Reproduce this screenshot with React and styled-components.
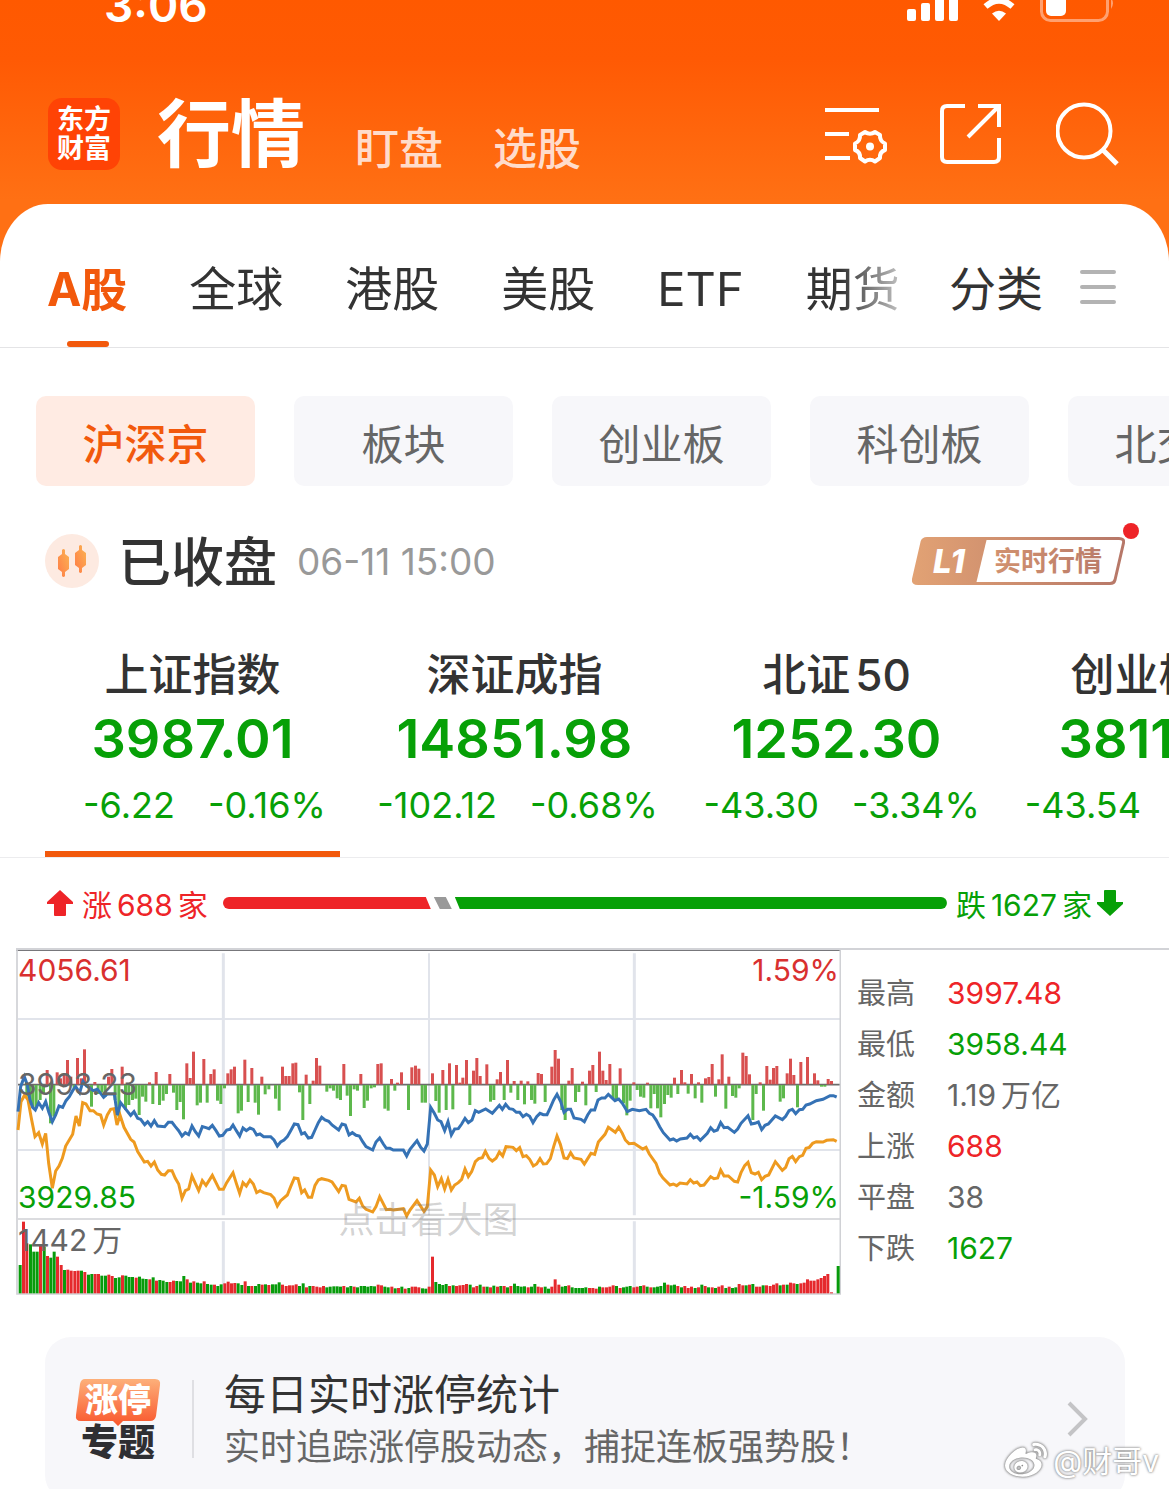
import styled, { createGlobalStyle } from "styled-components";
import { FaWeibo } from "react-icons/fa";

const GlobalStyle = createGlobalStyle`
  * {
    box-sizing: border-box;
  }
  body {
    margin: 0;
    background: #fff;
    color: #333;
    font-family: Inter, "Noto Sans CJK SC", sans-serif;
  }
  button {
    margin: 0;
    padding: 0;
    border: none;
    background: none;
    color: inherit;
    font: inherit;
    white-space: nowrap;
    cursor: pointer;
  }
  svg {
    display: block;
    flex-shrink: 0;
  }
`;

const red = "#ee2428";
const green = "#07a007";
const orange = "#f2590c";

const Page = styled.div`
  position: relative;
  height: 100vh;
  overflow: hidden;
  background: linear-gradient(#ff5900 0, #ff5a04 60px, #ff7014 200px);
`;

const StatusBar = styled.div`
  display: flex;
  justify-content: space-between;
  align-items: flex-end;
  height: 24px;
  padding: 0 54px 0 104px;
  color: #fff;
`;

const Clock = styled.span`
  height: 38px;
  font-size: 46px;
  line-height: 38px;
  font-weight: 600;
`;

const Header = styled.header`
  display: flex;
  align-items: center;
  padding: 74px 49px 34px 48px;
  color: #fff;
`;

const Logo = styled.div`
  display: grid;
  place-content: center;
  width: 72px;
  height: 72px;
  border-radius: 14px;
  background: #ff4305;
  font-size: 27px;
  line-height: 29px;
  font-weight: 700;
`;

const MainNav = styled.nav`
  display: flex;
  align-items: flex-end;
  flex: 1;
  gap: 50px;
  height: 72px;
  margin-left: 37px;
`;

const NavButton = styled.button`
  color: ${(p) => (p.$active ? "#fff" : "#ffdccb")};
  font-size: ${(p) => (p.$active ? "74px" : "44px")};
  line-height: ${(p) => (p.$active ? "72px" : "42px")};
  font-weight: ${(p) => (p.$active ? 700 : 500)};
`;

const HeaderIcons = styled.div`
  display: flex;
  gap: 52px;
`;

const Sheet = styled.main`
  border-radius: 48px 48px 0 0 / 58px 58px 0 0;
  background: #fff;
`;

const TabBar = styled.div`
  display: flex;
  height: 144px;
  border-bottom: 1px solid #e4e4e6;
`;

const TabScroller = styled.div`
  display: flex;
  flex: 1;
  gap: 62px;
  min-width: 0;
  padding-left: 47px;
  overflow: hidden;
  mask-image: linear-gradient(to right, #000 calc(100% - 84px), transparent);
`;

const Tab = styled.button`
  position: relative;
  padding-bottom: 28px;
  padding-top: 55px;
  color: ${(p) => (p.$active ? orange : "#333")};
  font-size: ${(p) => (p.$active ? "46px" : "47px")};
  line-height: 60px;
  font-weight: ${(p) => (p.$active ? 700 : 400)};

  &::after {
    content: "";
    display: ${(p) => (p.$active ? "block" : "none")};
    position: absolute;
    bottom: 0;
    left: 50%;
    width: 42px;
    height: 6px;
    margin-left: -20px;
    border-radius: 3px;
    background: ${orange};
  }
`;

const TabTools = styled.div`
  display: flex;
  gap: 36px;
  padding: 0 52px 0 24px;
`;

const MenuButton = styled.button`
  padding-top: 24px;
`;

const Chips = styled.div`
  display: flex;
  gap: 39px;
  padding: 48px 0 48px 36px;
  overflow: hidden;
`;

const Chip = styled.button`
  flex: 0 0 219px;
  height: 90px;
  border-radius: 10px;
  background: ${(p) => (p.$active ? "#ffebe3" : "#f7f7fa")};
  color: ${(p) => (p.$active ? orange : "#666")};
  font-size: 42px;
  font-weight: ${(p) => (p.$active ? 500 : 400)};
`;

const MarketState = styled.div`
  display: flex;
  align-items: center;
  height: 54px;
  padding: 0 44px 0 45px;
`;

const StateTitle = styled.h2`
  margin: 0 20px 0 19px;
  padding-top: 4px;
  font-size: 53px;
  line-height: 54px;
  font-weight: 500;
`;

const Time = styled.time`
  flex: 1;
  color: #999;
  font-size: 37px;
`;

const LevelButton = styled.button`
  position: relative;
`;

const Dot = styled.span`
  position: absolute;
  top: -14px;
  right: -14px;
  width: 16px;
  height: 16px;
  border-radius: 50%;
  background: ${red};
`;

const IndexList = styled.div`
  display: flex;
  gap: 27px;
  padding: 57px 0 0 45px;
  overflow: hidden;
  border-bottom: 1px solid #ececee;
`;

const IndexItem = styled.button`
  flex: 0 0 295px;
  padding-bottom: 24px;
  border-bottom: 6px solid ${(p) => (p.$active ? orange : "transparent")};
  color: ${green};
`;

const IndexName = styled.div`
  color: #333;
  font-size: 44px;
  line-height: 60px;
  font-weight: 500;
`;

const IndexValue = styled.div`
  margin-bottom: 10px;
  font-size: 54px;
  line-height: 68px;
  font-weight: 600;
`;

const IndexChange = styled.div`
  display: grid;
  grid-template-columns: 130px auto;
  justify-content: start;
  gap: 33px;
  font-size: 36px;
  line-height: 44px;

  span:first-child {
    justify-self: end;
  }
`;

const Breadth = styled.div`
  display: flex;
  align-items: center;
  height: 90px;
  padding: 0 46px 0 47px;
`;

const BreadthText = styled.span`
  margin: ${(p) => (p.$up ? "0 15px 0 9px" : "0 5px 0 9px")};
  color: ${(p) => (p.$up ? red : green)};
  font-size: 30px;
  white-space: nowrap;
`;

const BreadthBar = styled.div`
  display: flex;
  flex: 1;
  gap: 3px;
  height: 12px;
  border-radius: 6px;
  overflow: hidden;
`;

const Segment = styled.div`
  background: ${(p) => p.$color};
  clip-path: ${(p) => p.$shape};
`;

const Quote = styled.section`
  display: grid;
  grid-template-columns: 825fr 328fr;
  margin-left: 16px;
  border-top: 2px solid #d2d3d7;
`;

const ChartBox = styled.div`
  position: relative;

  svg {
    width: 100%;
  }
`;

const ChartLabel = styled.span`
  position: absolute;
  top: ${(p) => p.$top};
  left: ${(p) => (p.$right ? "auto" : "2px")};
  right: ${(p) => (p.$right ? "2px" : "auto")};
  color: ${(p) => p.$color || "#666"};
  font-size: 30px;
  line-height: 36px;
`;

const ChartHint = styled.span`
  position: absolute;
  top: 73%;
  left: 0;
  right: 0;
  color: rgba(120, 120, 120, 0.32);
  font-size: 36px;
  line-height: 36px;
  text-align: center;
`;

const Stats = styled.dl`
  display: grid;
  grid-template-columns: 90px 1fr;
  align-content: start;
  margin: 0;
  padding: 18px 0 0 16px;
  font-size: 29px;
  line-height: 51px;
`;

const StatLabel = styled.dt`
  color: #666;
`;

const StatValue = styled.dd`
  margin: 0;
  color: ${(p) => p.$color || "#666"};
  font-size: 30px;
`;

const Spaced = styled.span`
  display: inline-flex;
  align-items: baseline;
  gap: 5px;
`;

const Promo = styled.a`
  display: flex;
  align-items: center;
  height: 164px;
  margin: 42px 44px 0 45px;
  padding: 0 36px 0 30px;
  border-radius: 26px;
  background: #f7f7fa;
  color: inherit;
  text-decoration: none;
`;

const PromoDivider = styled.div`
  width: 2px;
  height: 78px;
  margin: 0 30px 0 31px;
  background: #dfdfe3;
`;

const PromoText = styled.div`
  flex: 1;
  padding-top: 4px;
`;

const PromoTitle = styled.div`
  font-size: 42px;
  line-height: 34px;
`;

const PromoSub = styled.div`
  margin-top: 18px;
  color: #666;
  font-size: 36px;
  line-height: 34px;
`;

const Watermark = styled.div`
  position: absolute;
  right: 10px;
  bottom: 7px;
  display: flex;
  align-items: center;
  gap: 6px;
  color: #fff;
  font-size: 30px;
  line-height: 38px;
  text-shadow: 0 0 3px #888, 0 0 2px #999;

  svg {
    filter: drop-shadow(0 0 1px #888) drop-shadow(0 0 1px #999);
  }
`;

const tabs = ["A股", "全球", "港股", "美股", "ETF", "期货"];
const chips = ["沪深京", "板块", "创业板", "科创板", "北交所"];

const indexes = [
  { name: "上证指数", value: "3987.01", change: "-6.22", percent: "-0.16%" },
  { name: "深证成指", value: "14851.98", change: "-102.12", percent: "-0.68%" },
  { name: "北证50", value: "1252.30", change: "-43.30", percent: "-3.34%" },
  { name: "创业板指", value: "3811.56", change: "-43.54", percent: "-1.13%" },
];

const stats = [
  ["最高", "3997.48", red],
  ["最低", "3958.44", green],
  ["金额", "1.19万亿"],
  ["上涨", "688", red],
  ["平盘", "38"],
  ["下跌", "1627", green],
];

const priceLine =
  "24,725 32,650 43,620 52,645 60,690 68,712 76,720 86,698 97,715 107,695 116,725 127,755 137,735 147,708 158,712 168,692 178,680 188,662 197,650 209,668 219,634 229,648 240,655 250,662 262,658 272,670 281,682 292,672 313,672 322,735 332,698 343,712 362,736 372,725 383,745 392,748 404,764 413,755 423,768 433,752 443,768 464,770 475,757 486,757 496,770 506,782 516,798 526,788 536,794 546,768 556,785 566,798 577,770 588,773 597,776 607,766 618,782 628,798 638,796 650,780 660,778 669,765 679,782 689,798 699,774 709,782 720,774 730,778 740,795 750,792 761,800 782,800 792,810 802,828 812,816 822,810 832,800 842,782 853,762 864,764 875,792 884,788 895,804 905,802 915,780 925,758 935,742 945,750 956,754 966,765 986,780 996,762 1006,765 1017,795 1027,788 1038,796 1048,798 1058,815 1068,830 1088,840 1098,816 1109,804 1120,822 1129,835 1140,835 1150,840 1180,840 1190,858 1200,838 1221,812 1232,832 1242,843 1252,822 1262,712 1273,730 1283,750 1293,755 1304,782 1314,755 1324,795 1334,777 1345,776 1355,762 1365,745 1375,758 1386,750 1396,722 1406,727 1427,717 1447,730 1468,706 1477,718 1487,703 1498,716 1509,718 1519,727 1529,727 1539,740 1549,733 1559,739 1569,758 1580,740 1590,730 1600,734 1611,734 1620,715 1631,690 1641,673 1652,695 1662,727 1672,718 1682,718 1692,744 1713,748 1723,755 1733,735 1743,720 1754,720 1764,690 1775,684 1785,684 1795,673 1815,692 1826,687 1837,700 1852,725 1867,718 1888,722 1908,718 1918,730 1928,735 1939,751 1949,770 1960,788 1980,810 1990,807 2000,813 2011,807 2031,804 2041,793 2051,804 2061,800 2071,811 2092,790 2102,773 2112,784 2122,780 2132,758 2142,773 2153,772 2173,787 2183,777 2193,760 2214,737 2224,762 2235,760 2245,756 2255,779 2265,766 2275,762 2296,738 2317,749 2327,739 2337,722 2347,718 2357,731 2368,719 2378,718 2388,705 2399,702 2419,692 2439,688 2460,677 2470,677 2480,681";

const averageLine =
  "24,780 33,695 44,675 54,690 64,745 75,800 86,788 97,822 107,790 116,880 127,955 137,903 147,888 157,865 167,828 188,793 198,738 208,768 218,698 228,702 240,722 250,722 261,732 272,735 281,765 292,735 302,718 312,716 321,765 330,735 342,772 362,808 372,816 383,845 403,876 413,874 423,888 433,876 443,900 454,913 464,915 475,902 486,902 496,925 506,942 516,985 526,962 536,957 546,918 556,940 566,962 577,932 588,946 607,916 628,958 640,958 650,938 669,908 679,940 689,970 699,938 709,948 720,930 730,942 740,968 750,962 761,968 782,974 792,984 802,1008 812,992 832,975 842,950 853,924 864,926 875,968 884,960 895,982 905,982 915,946 925,930 935,926 956,931 966,936 986,965 996,946 1006,948 1017,988 1038,996 1048,985 1058,1008 1068,1018 1088,1026 1098,1010 1109,980 1129,1019 1140,1018 1150,1020 1180,1016 1190,1038 1200,1020 1221,992 1242,1024 1252,1010 1262,900 1273,915 1283,950 1294,926 1304,957 1314,928 1324,960 1334,945 1345,938 1355,928 1365,897 1375,920 1385,905 1396,875 1406,866 1417,863 1426,844 1437,865 1447,873 1458,865 1468,846 1478,858 1488,830 1509,832 1519,842 1529,833 1539,860 1549,857 1559,868 1570,888 1580,882 1590,866 1600,882 1610,881 1621,866 1631,830 1641,798 1651,823 1662,864 1672,866 1682,848 1692,864 1713,868 1723,882 1743,850 1754,853 1765,816 1785,793 1795,772 1816,787 1826,772 1837,790 1846,810 1857,821 1872,820 1898,837 1908,832 1918,852 1938,880 1949,910 1959,924 1980,945 1990,942 2000,947 2010,939 2031,942 2041,929 2051,939 2061,936 2071,947 2082,945 2102,920 2112,926 2123,924 2132,900 2142,918 2155,918 2173,934 2183,936 2193,908 2204,887 2214,877 2224,908 2235,912 2245,907 2255,929 2265,919 2276,915 2296,875 2317,901 2327,892 2337,866 2347,859 2357,875 2368,860 2378,856 2388,835 2398,832 2408,820 2419,815 2439,816 2450,811 2470,809 2480,814";

// x and far end of each momentum bar, the near end sits on the middle axis
const upBars =
  "111,600 141,607 151,625 162,615 172,570 182,620 202,564 213,625 223,538 254,636 295,620 305,597 336,590 418,637 438,606 479,612 530,580 540,624 550,545 581,567 602,612 612,598 653,610 663,598 673,590 704,569 725,594 755,620 817,590 827,618 837,618 848,580 857,578 888,614 909,632 919,564 929,587 1001,582 1052,612 1103,582 1113,580 1144,627 1162,638 1174,607 1205,592 1216,587 1226,596 1267,610 1298,600 1318,580 1339,585 1349,638 1358,623 1369,570 1390,602 1400,564 1410,618 1430,583 1461,628 1471,606 1492,570 1512,633 1533,632 1553,634 1584,609 1594,612 1625,590 1635,540 1645,566 1676,632 1686,594 1717,635 1738,602 1748,585 1768,545 1778,602 1788,630 1799,582 1830,595 1871,637 1912,638 1993,623 2014,600 2024,637 2044,612 2065,637 2086,625 2096,621 2106,582 2126,628 2136,553 2156,620 2198,548 2208,558 2218,613 2250,637 2270,588 2280,629 2290,594 2300,588 2331,610 2341,566 2351,615 2372,576 2392,561 2413,610 2423,631 2454,627 2464,633";

const downBars =
  "50,680 60,700 68,712 78,715 90,690 100,672 121,760 131,740 192,655 244,710 264,672 275,668 285,680 315,690 326,740 346,720 356,705 367,690 377,686 387,735 397,680 407,695 428,702 448,705 459,692 469,672 490,668 500,720 510,696 520,748 561,706 571,698 591,698 622,692 632,702 643,655 684,730 694,722 714,696 735,698 745,734 765,673 776,658 796,686 807,722 868,667 878,750 899,702 950,665 960,655 970,662 981,685 991,690 1011,677 1021,738 1032,658 1042,662 1062,714 1072,692 1083,655 1093,652 1124,716 1134,722 1154,662 1195,720 1236,698 1246,698 1277,693 1287,728 1308,720 1328,718 1379,705 1441,695 1451,690 1482,690 1502,668 1523,690 1543,703 1564,690 1574,701 1605,696 1655,720 1665,750 1696,696 1706,666 1727,706 1758,666 1809,685 1819,688 1840,700 1850,736 1860,692 1881,660 1891,680 1901,683 1922,715 1932,672 1942,715 1952,742 1963,702 1973,675 1983,683 2003,672 2034,671 2055,685 2075,698 2116,680 2147,716 2167,678 2177,683 2187,655 2228,750 2238,672 2260,722 2310,695 2320,685 2362,712 2434,650 2444,650";

// one bar a minute, negative is a falling minute
const volumes = [
  -85, 215, 150, -147, -125, -125, 142, -140, 112, -107, -125, 110, 85, -70, 71,
  68, 67, 68, -68, 64, -56, -58, 58, 58, -53, -53, 56, 52, -46, -48, 54, -53,
  -49, -49, 47, -50, -44, -43, 42, -48, 38, -40, -38, -34, 34, 38, -37, -36,
  -52, 42, -32, 36, -32, -30, 36, -28, -26, 26, -22, -27, 30, 35, 30, 31, -30,
  -25, 36, -22, 22, -22, -28, 26, -27, 25, -27, -27, -33, 26, 22, 24, 24, 27,
  -22, -30, 18, -22, 22, 20, 18, 22, -18, -20, -21, -21, -20, 22, -18, -22, 20,
  -18, -22, -22, -20, -22, -21, 26, 24, -20, -18, 20, -15, 16, -20, 14, -16, 20,
  20, 18, -15, -14, 20, 110, -34, -28, -25, -28, 22, -24, 22, 24, 25, 28, -26,
  18, 22, -26, 20, -20, 18, -23, 20, -22, 22, -18, 22, -29, -22, -20, -21, 18,
  -20, -28, 20, 18, -20, -14, 20, 42, 26, -20, -22, 24, -18, -16, -16, -16, -18,
  16, 16, 14, -20, 18, 18, 20, 24, -22, 16, -18, -20, -22, 18, 20, -22, 24, -20,
  18, -18, -20, -22, -32, 26, -24, -26, 22, -18, 22, 16, 20, -16, 18, -26, 22,
  -18, 18, -16, 20, 24, -16, 20, -16, -18, 28, 24, -24, 26, -28, 20, 20, -24,
  24, 22, 26, 30, -24, 26, -26, 32, 30, -28, 30, 32, 42, 38, 38, 42, 46, 52, 58,
  3, 0, -82,
];

const parse = (points) => points.split(" ").map((p) => p.split(",").map(Number));

// puts a thin gap between the digits and the characters next to them
const Mixed = ({ text }) => (
  <Spaced>
    {text
      .split(/([\d.]+)/)
      .filter(Boolean)
      .map((part) => (
        <span key={part}>{part}</span>
      ))}
  </Spaced>
);

const Chart = () => (
  <svg viewBox="18 240 2475 1035" aria-hidden="true">
    <g stroke="#e1e4eb">
      <path d="M24 447H2490M24 840H2490" strokeWidth="6" />
      <path d="M640 250V1036M640 1054V1270M1873 250V1036M1873 1054V1270" strokeWidth="9" />
      <path d="M1257 250V1036M1257 1054V1270" strokeWidth="6" />
    </g>
    <path d="M24 644H2490" stroke="#6c6c6c" strokeWidth="5" />
    <path d="M18 241H2490" stroke="#77777b" strokeWidth="4" />
    <path d="M24 1047H2490M21 240V1272H2491V240" fill="none" stroke="#d0d1d5" strokeWidth="5" />
    {parse(upBars).map(([x, y]) => (
      <rect key={x} x={x - 4} y={y} width="9" height={643 - y} fill="#d85050" />
    ))}
    {parse(downBars).map(([x, y]) => (
      <rect key={x} x={x - 4} y="645" width="9" height={y - 645} fill="#5db84c" />
    ))}
    {volumes.map((v, i) => (
      <rect
        key={i}
        x={26 + Math.round(i * 10.225)}
        y={1270 - Math.abs(v)}
        width="9"
        height={Math.abs(v)}
        fill={v > 0 ? "#e5292d" : "#079b0b"}
      />
    ))}
    <polyline points={averageLine} fill="none" stroke="#ee9a1f" strokeWidth="9" />
    <polyline points={priceLine} fill="none" stroke="#3572b5" strokeWidth="9" />
  </svg>
);

const PhoneIcons = () => (
  <svg width="208" height="24" viewBox="0 0 208 24" fill="#fff" aria-hidden="true">
    <rect x="0" y="9" width="9" height="12" rx="2" />
    <rect x="14" y="3" width="9" height="18" rx="2" />
    <rect x="28" y="-6" width="9" height="27" rx="2" />
    <rect x="42" y="-12" width="9" height="33" rx="2" />
    <path d="M92 21L85 13.500Q92 8 99 13.500Z" />
    <path d="M78.500 6.500Q92 -5.500 105.500 6.500" fill="none" stroke="#fff" strokeWidth="6" />
    <path d="M70 -2Q92 -21 114 -2" fill="none" stroke="#fff" strokeWidth="5" />
    <rect x="134.500" y="-14" width="66" height="34.500" rx="9" fill="none" stroke="#ffa070" strokeWidth="3" />
    <rect x="139" y="-8" width="20" height="24" rx="5" />
    <path d="M204 -2q4 5 0 11z" fill="#ffa070" />
  </svg>
);

const Candles = () => (
  <svg width="54" height="54" viewBox="0 0 54 54" aria-hidden="true">
    <defs>
      <linearGradient id="candle" x1="0" y1="1" x2="1" y2="0">
        <stop offset="0" stopColor="#ff7c46" />
        <stop offset="1" stopColor="#fbb453" />
      </linearGradient>
    </defs>
    <circle cx="27" cy="27" r="27" fill="#fdeae1" />
    <g fill="url(#candle)">
      <path d="M17 16q1.500 -2 3 0v4l4 3v12l-4 3v4q-1.500 2 -3 0v-4l-4 -3v-12l4 -3z" />
      <path d="M34 12q1.500 -2 3 0v4l4 3v12l-4 3v4q-1.500 2 -3 0v-4l-4 -3v-12l4 -3z" />
    </g>
  </svg>
);

const LevelBadge = () => (
  <svg width="213" height="48" viewBox="0 0 213 48" fontFamily='Inter, "Noto Sans CJK SC", sans-serif'>
    <defs>
      <linearGradient id="level" gradientUnits="userSpaceOnUse" x1="0" y1="0" x2="213" y2="0">
        <stop offset="0" stopColor="#e2a274" />
        <stop offset="1" stopColor="#b67768" />
      </linearGradient>
    </defs>
    <path
      d="M15 1.500H207Q212.500 1.500 211.500 6L203 43Q202 46.500 198 46.500H6Q0.500 46.500 1.500 42L10 5Q11 1.500 15 1.500Z"
      fill="#fff"
      stroke="url(#level)"
      strokeWidth="3"
    />
    <path d="M14 1H75L64 47H5Q1 47 2 42L10 5Q11 1 14 1Z" fill="url(#level)" />
    <text x="21" y="36" fontSize="33" fontWeight="800" fontStyle="italic" fill="#fff">
      L1
    </text>
    <text x="82" y="34" fontSize="27" fontWeight="700" fill="url(#level)">
      实时行情
    </text>
  </svg>
);

const PromoIcon = () => (
  <svg width="86" height="80" viewBox="0 0 86 80" fontFamily='"Noto Sans CJK SC", sans-serif' fontWeight="900">
    <defs>
      <linearGradient id="promo" x1="0" y1="0" x2="0" y2="1">
        <stop offset="0" stopColor="#fdb07a" />
        <stop offset="1" stopColor="#f9562c" />
      </linearGradient>
    </defs>
    <path
      d="M10 0H80Q86 0 85 6L81 37Q80 42 75 42H48L43 47L38 42H6Q0 42 1 36L5 5Q6 0 10 0Z"
      fill="url(#promo)"
    />
    <text x="10" y="33" fontSize="33" fill="#fff">
      涨停
    </text>
    <text x="6" y="77" fontSize="37" fill="#2f2f33">
      专题
    </text>
  </svg>
);

const App = () => {
  return (
    <Page>
      <GlobalStyle />
      <StatusBar>
        <Clock>3:06</Clock>
        <PhoneIcons />
      </StatusBar>

      <Header>
        <Logo>
          <span>东方</span>
          <span>财富</span>
        </Logo>
        <MainNav>
          <NavButton $active>行情</NavButton>
          <NavButton>盯盘</NavButton>
          <NavButton>选股</NavButton>
        </MainNav>
        <HeaderIcons>
          <button aria-label="设置">
            <svg width="64" height="64" viewBox="0 0 64 64" fill="none" stroke="#fff" strokeWidth="4">
              <path d="M1 8H55M1 32H25M1 56H26" />
              <path
                d="M41 30Q46 33.500 51 30L56 33Q55.500 39 61 41.500V48Q55.500 50 56 56L51 59.500Q46 56 41 59.500L36 56Q36.500 50 31 48V41.500Q36.500 39 36 33Z"
                strokeLinejoin="round"
              />
              <circle cx="46" cy="44.500" r="4" fill="#fff" stroke="none" />
            </svg>
          </button>
          <button aria-label="分享">
            <svg width="64" height="64" viewBox="0 0 64 64" fill="none" stroke="#fff" strokeWidth="4">
              <path d="M25 4H7Q2 4 2 9V55Q2 60 7 60H54Q59 60 59 55V36M38 4H59V25M58 5L28 35" />
            </svg>
          </button>
          <button aria-label="搜索">
            <svg width="64" height="64" viewBox="0 0 64 64" fill="none" stroke="#fff" strokeWidth="4">
              <circle cx="28" cy="29" r="26.500" />
              <path d="M47 48L61 62" strokeWidth="5" />
            </svg>
          </button>
        </HeaderIcons>
      </Header>

      <Sheet>
        <TabBar>
          <TabScroller>
            {tabs.map((tab, i) => (
              <Tab key={tab} $active={i === 0}>
                {tab}
              </Tab>
            ))}
          </TabScroller>
          <TabTools>
            <Tab>分类</Tab>
            <MenuButton aria-label="更多">
              <svg width="38" height="38" viewBox="0 0 38 38" stroke="#b3b3b3" strokeWidth="4" strokeLinecap="round">
                <path d="M3 3H35M3 18H35M3 33H35" />
              </svg>
            </MenuButton>
          </TabTools>
        </TabBar>

        <Chips>
          {chips.map((chip, i) => (
            <Chip key={chip} $active={i === 0}>
              {chip}
            </Chip>
          ))}
        </Chips>

        <MarketState>
          <Candles />
          <StateTitle>已收盘</StateTitle>
          <Time>06-11 15:00</Time>
          <LevelButton>
            <LevelBadge />
            <Dot />
          </LevelButton>
        </MarketState>

        <IndexList>
          {indexes.map((item, i) => (
            <IndexItem key={item.name} $active={i === 0}>
              <IndexName>
                <Mixed text={item.name} />
              </IndexName>
              <IndexValue>{item.value}</IndexValue>
              <IndexChange>
                <span>{item.change}</span>
                <span>{item.percent}</span>
              </IndexChange>
            </IndexItem>
          ))}
        </IndexList>

        <Breadth>
          <svg width="26" height="26" viewBox="0 0 26 26" fill={red} aria-hidden="true">
            <path d="M13 0L26 12V14H19V25Q19 26 18 26H8Q7 26 7 25V14H0V12Z" />
          </svg>
          <BreadthText $up>
            <Mixed text="涨688家" />
          </BreadthText>
          <BreadthBar>
            <Segment
              $color={red}
              $shape="polygon(0 0, calc(100% - 5px) 0, 100% 100%, 0 100%)"
              style={{ flexGrow: 688 }}
            />
            <Segment
              $color="#999"
              $shape="polygon(0 0, calc(100% - 6px) 0, 100% 100%, 6px 100%)"
              style={{ width: 18 }}
            />
            <Segment
              $color={green}
              $shape="polygon(0 0, 100% 0, 100% 100%, 5px 100%)"
              style={{ flexGrow: 1627 }}
            />
          </BreadthBar>
          <BreadthText>
            <Mixed text="跌1627家" />
          </BreadthText>
          <svg width="26" height="26" viewBox="0 0 26 26" fill={green} aria-hidden="true">
            <path d="M13 26L0 14V12H7V1Q7 0 8 0H18Q19 0 19 1V12H26V14Z" />
          </svg>
        </Breadth>

        <Quote>
          <ChartBox>
            <Chart />
            <ChartLabel $top="2px" $color="#d9302f">4056.61</ChartLabel>
            <ChartLabel $top="2px" $color="#d9302f" $right>1.59%</ChartLabel>
            <ChartLabel $top="116px">3993.23</ChartLabel>
            <ChartLabel $top="229px" $color={green}>3929.85</ChartLabel>
            <ChartLabel $top="229px" $color={green} $right>-1.59%</ChartLabel>
            <ChartLabel $top="272px">
              <Mixed text="1442万" />
            </ChartLabel>
            <ChartHint>点击看大图</ChartHint>
          </ChartBox>
          <Stats>
            {stats.map(([label, value, color]) => [
              <StatLabel key={label}>{label}</StatLabel>,
              <StatValue key={value} $color={color}>
                <Mixed text={value} />
              </StatValue>,
            ])}
          </Stats>
        </Quote>

        <Promo href="#limit-up">
          <PromoIcon />
          <PromoDivider />
          <PromoText>
            <PromoTitle>每日实时涨停统计</PromoTitle>
            <PromoSub>实时追踪涨停股动态，捕捉连板强势股！</PromoSub>
          </PromoText>
          <svg width="22" height="36" viewBox="0 0 22 36" fill="none" stroke="#c4c4c6" strokeWidth="4">
            <path d="M2 2L18 18L2 34" />
          </svg>
        </Promo>
      </Sheet>

      <Watermark>
        <FaWeibo size={42} />
        @财哥v
      </Watermark>
    </Page>
  );
};

export default App;
